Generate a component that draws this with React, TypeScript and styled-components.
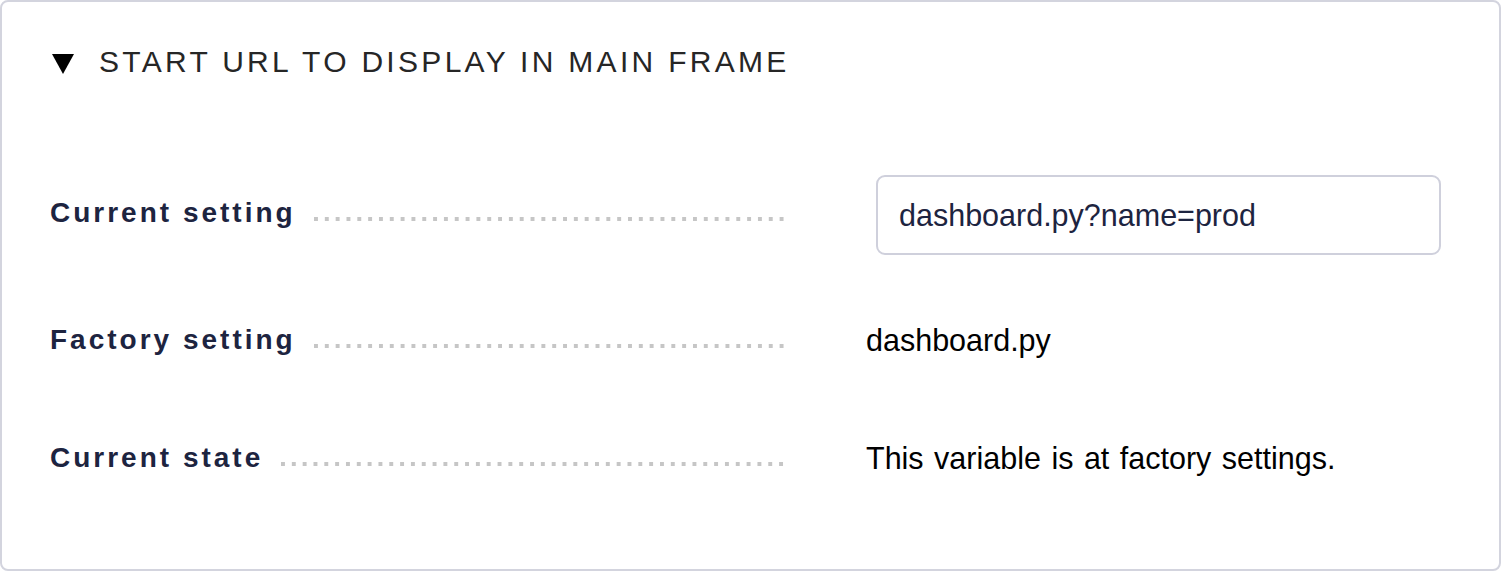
import React from "react";
import styled, { createGlobalStyle } from "styled-components";

const GlobalStyle = createGlobalStyle`
  html, body { margin: 0; padding: 0; background: #ffffff; }
  body { font-family: "Liberation Sans", Arial, sans-serif; }
  * { box-sizing: border-box; }
`;

const Panel = styled.section`
  width: 1501px;
  height: 571px;
  border: 2px solid #d3d4de;
  border-radius: 8px;
  padding: 40px 48px 0 48px;
  background: #ffffff;
`;

const Header = styled.div`
  display: flex;
  align-items: center;
  gap: 25px;
  height: 40px;
  padding-left: 2px;
`;

const Caret = styled.svg`
  width: 22px;
  height: 20px;
  flex: none;
  margin-top: 4px;
`;

const Title = styled.h2`
  margin: 0;
  font-family: "Liberation Sans", Arial, sans-serif;
  font-weight: 400;
  font-size: 30px;
  line-height: 40px;
  letter-spacing: 3.3px;
  color: #262626;
  text-transform: uppercase;
`;

const Rows = styled.div`
  margin-top: 93px;
  display: flex;
  flex-direction: column;
  gap: 56px;
`;

const Row = styled.div<{ $tall?: boolean }>`
  display: grid;
  grid-template-columns: 739px 1fr;
  column-gap: 77px;
  align-items: center;
  min-height: ${(p) => (p.$tall ? "80px" : "62px")};
`;

const LabelCell = styled.div`
  display: flex;
  align-items: baseline;
  gap: 18px;
  min-width: 0;
  padding-bottom: 4px;
`;

const Label = styled.span`
  flex: none;
  font-weight: 700;
  font-size: 28px;
  letter-spacing: 3px;
  color: #1d2440;
`;

const Leader = styled.span`
  flex: 1;
  height: 4px;
  align-self: baseline;
  transform: translateY(-1px);
  background-image: linear-gradient(to right, #c6c6c6 4px, transparent 4px);
  background-size: 10.83px 4px;
  background-repeat: repeat-x;
`;

const ValueText = styled.span<{ $wide?: boolean }>`
  font-size: 30.5px;
  color: #000000;
  padding-bottom: 4px;
  word-spacing: ${(p) => (p.$wide ? "2px" : "0")};
`;

const Input = styled.input`
  display: block;
  width: calc(100% - 20px);
  margin-left: 10px;
  height: 80px;
  border: 2px solid #cfd0dc;
  border-radius: 9px;
  padding: 0 21px;
  font-family: "Liberation Sans", Arial, sans-serif;
  font-size: 30.5px;
  color: #1d2440;
  background: #ffffff;
  outline: none;
`;

const rows = [
  { label: "Current setting", kind: "input", value: "dashboard.py?name=prod" },
  { label: "Factory setting", kind: "text", value: "dashboard.py" },
  { label: "Current state", kind: "sentence", value: "This variable is at factory settings." },
];

export default function App() {
  return (
    <>
      <GlobalStyle />
      <Panel>
        <Header>
          <Caret viewBox="0 0 22 20">
            <polygon points="0,0 22,0 11,20" fill="#000000" />
          </Caret>
          <Title>Start URL to display in main frame</Title>
        </Header>
        <Rows>
          {rows.map((r) => (
            <Row key={r.label} $tall={r.kind === "input"}>
              <LabelCell>
                <Label>{r.label}</Label>
                <Leader />
              </LabelCell>
              {r.kind === "input" ? (
                <Input defaultValue={r.value} />
              ) : (
                <ValueText $wide={r.kind === "sentence"}>{r.value}</ValueText>
              )}
            </Row>
          ))}
        </Rows>
      </Panel>
    </>
  );
}
